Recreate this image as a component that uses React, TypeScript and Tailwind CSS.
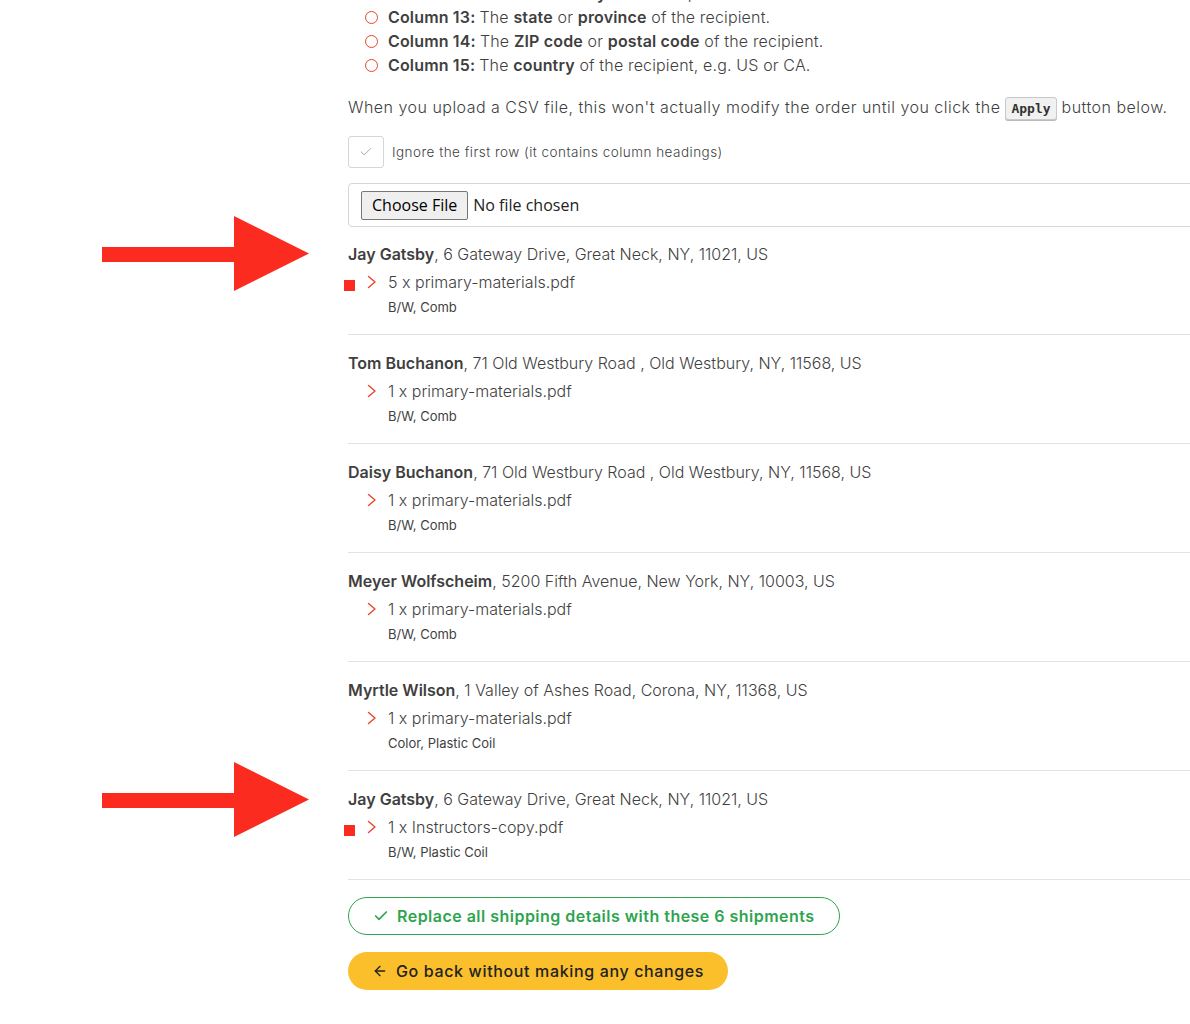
import React from 'react';
import { Check, ArrowLeft } from 'lucide-react';

interface Shipment {
  name: string;
  address: string;
  qty: number;
  file: string;
  options: string;
  flagged?: boolean;
}

const shipments: Shipment[] = [
  { name: 'Jay Gatsby', address: '6 Gateway Drive, Great Neck, NY, 11021, US', qty: 5, file: 'primary-materials.pdf', options: 'B/W, Comb', flagged: true },
  { name: 'Tom Buchanon', address: '71 Old Westbury Road , Old Westbury, NY, 11568, US', qty: 1, file: 'primary-materials.pdf', options: 'B/W, Comb' },
  { name: 'Daisy Buchanon', address: '71 Old Westbury Road , Old Westbury, NY, 11568, US', qty: 1, file: 'primary-materials.pdf', options: 'B/W, Comb' },
  { name: 'Meyer Wolfscheim', address: '5200 Fifth Avenue, New York, NY, 10003, US', qty: 1, file: 'primary-materials.pdf', options: 'B/W, Comb' },
  { name: 'Myrtle Wilson', address: '1 Valley of Ashes Road, Corona, NY, 11368, US', qty: 1, file: 'primary-materials.pdf', options: 'Color, Plastic Coil' },
  { name: 'Jay Gatsby', address: '6 Gateway Drive, Great Neck, NY, 11021, US', qty: 1, file: 'Instructors-copy.pdf', options: 'B/W, Plastic Coil', flagged: true },
];

const columns: { label: string; body: React.ReactNode }[] = [
  { label: 'Column 12:', body: <>The <b className="font-semibold">town</b> or <b className="font-semibold">city</b> of the recipient.</> },
  { label: 'Column 13:', body: <>The <b className="font-semibold">state</b> or <b className="font-semibold">province</b> of the recipient.</> },
  { label: 'Column 14:', body: <>The <b className="font-semibold">ZIP code</b> or <b className="font-semibold">postal code</b> of the recipient.</> },
  { label: 'Column 15:', body: <>The <b className="font-semibold">country</b> of the recipient, e.g. US or CA.</> },
];

// annotation arrow drawn over the page
const Arrow = ({ top }: { top: string }) => (
  <svg className={`absolute left-[102px] ${top}`} width="207" height="75" viewBox="0 0 207 75">
    <polygon points="0,31 132,31 132,0 207,37.5 132,75 132,46 0,46" fill="#fb2c1f" />
  </svg>
);

export default function App() {
  return (
    <div className="relative min-h-[1024px] overflow-hidden bg-white text-[#3f3f3f] font-['Inter',sans-serif]">
      <Arrow top="top-[216px]" />
      <Arrow top="top-[762px]" />

      <div className="ml-[348px] w-[900px]">
        {/* Column list */}
        <ul className="-mt-[19px] pl-[17px]">
          {columns.map((c) => (
            <li key={c.label} className="flex items-center h-6 text-base font-light tracking-[0.01em]">
              <span className="w-[13px] h-[13px] rounded-full border-[1.5px] border-[#e8452c] mr-[10px]" />
              <span className="font-semibold mr-1">{c.label}</span>
              <span>{c.body}</span>
            </li>
          ))}
        </ul>

        <p className="mt-[18px] leading-6 text-[16px] font-light tracking-[0.03em]">
          When you upload a CSV file, this won't actually modify the order until you click the{' '}
          <code className="inline-block px-[5px] leading-[21px] tracking-normal bg-[#f1f1f1] border border-[#c9c9c9] rounded-[3px] text-[13px] font-bold font-['DejaVu_Sans_Mono',monospace] text-[#333] shadow-[0_1px_0_#bbb]">Apply</code>{' '}
          button below.
        </p>

        <label className="mt-[16px] flex items-center gap-2">
          <span className="w-9 h-8 border border-[#d6d6d6] rounded-[3px] flex items-center justify-center">
            <Check className="w-[14px] h-[14px] text-[#9a9a9a]" strokeWidth={1.5} />
          </span>
          <span className="text-[13.5px] font-light tracking-[0.035em]">Ignore the first row (it contains column headings)</span>
        </label>

        <div className="mt-[15px] h-11 border border-[#d6d6d6] rounded-[4px] flex items-center pl-3 font-['Open_Sans',sans-serif] text-[16px] text-[#222]">
          <span className="h-[29px] px-[10px] flex items-center bg-[#efefef] border border-[#767676] rounded-[2px] text-black">Choose File</span>
          <span className="ml-[5px]">No file chosen</span>
        </div>

        {/* Shipments */}
        <div className="mt-[15px]">
          {shipments.map((s, i) => (
            <div key={i} className="relative pb-[18px] pt-4 first:pt-0 border-b border-[#e3e3e3]">
              <div className="leading-6 text-base font-light">
                <span className="font-semibold">{s.name}</span>, {s.address}
              </div>
              <div className="mt-1 flex items-center leading-6 text-base font-light">
                {s.flagged && <span className="absolute -left-1 w-[11px] h-[11px] bg-[#fb2c1f] mt-[6px]" />}
                <svg className="ml-[19px]" width="10" height="14" viewBox="0 0 10 14" fill="none">
                  <polyline points="1.5,1.5 8,7 1.5,12.5" stroke="#e8452c" strokeWidth="1.4" strokeLinecap="round" strokeLinejoin="round" />
                </svg>
                <span className="ml-[11px]">{s.qty} x {s.file}</span>
              </div>
              <div className="mt-1 ml-10 leading-[18px] text-[13px] font-normal">{s.options}</div>
            </div>
          ))}
        </div>

        <div className="mt-[17px] flex flex-col items-start gap-[17px]">
          <button className="h-[38px] px-6 rounded-full border border-[#2ea44f] text-[#2ea44f] font-semibold text-base tracking-[0.03em] flex items-center gap-2">
            <Check className="w-4 h-4" strokeWidth={2.5} />
            Replace all shipping details with these 6 shipments
          </button>
          <button className="h-[38px] px-6 rounded-full bg-[#fbbf2c] text-[#222] font-medium text-base tracking-[0.04em] flex items-center gap-2">
            <ArrowLeft className="w-4 h-4" strokeWidth={2} />
            Go back without making any changes
          </button>
        </div>
      </div>
    </div>
  );
}
